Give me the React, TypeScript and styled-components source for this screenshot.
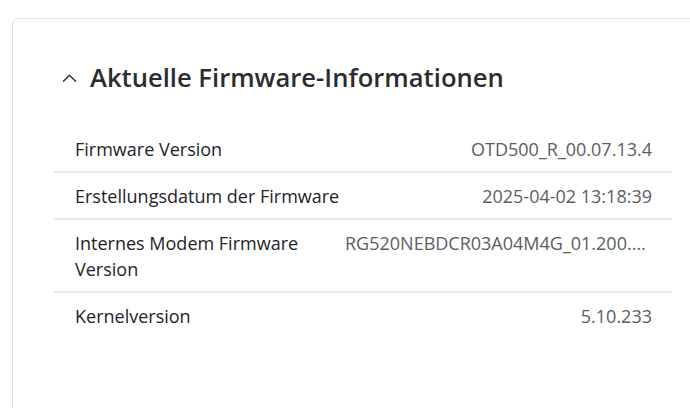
import React from "react";
import styled, { createGlobalStyle } from "styled-components";

const GlobalStyle = createGlobalStyle`
  html, body {
    margin: 0;
    padding: 0;
    background: #ffffff;
    overflow: hidden;
  }
  body {
    font-family: "Open Sans", "Noto Sans", Arial, sans-serif;
    color: #212529;
  }
`;

const Page = styled.div`
  width: 690px;
  height: 408px;
  padding: 18px 0 0 12px;
  box-sizing: border-box;
  overflow: hidden;
`;

const Card = styled.section`
  width: 720px;
  height: 420px;
  box-sizing: border-box;
  border: 1px solid #dde4ec;
  border-radius: 6px;
  padding: 0 0 0 41px;
  background: #fff;
`;

const Header = styled.button`
  display: flex;
  align-items: center;
  gap: 13px;
  border: none;
  background: none;
  padding: 0 0 0 8px;
  margin: 42px 0 0 0;
  height: 34px;
  cursor: pointer;
  color: #24272b;
`;

const Title = styled.h2`
  margin: 0;
  font-family: "Open Sans", "Noto Sans", sans-serif;
  font-size: 25.6px;
  font-weight: 600;
  line-height: 34px;
  color: #2a2c30;
`;

const Table = styled.div`
  margin-top: 31px;
  width: 618px;
  display: grid;
  grid-template-columns: 286px 1fr;
`;

const Row = styled.div<{ $last?: boolean }>`
  display: contents;
  & > div {
    padding-top: 10px;
    padding-bottom: 9px;
    border-bottom: ${(p) => (p.$last ? "none" : "2px solid #e6e9ed")};
    font-size: 18px;
    line-height: 26px;
  }
`;

const Label = styled.div`
  padding-left: 21px;
  color: #1f2328;
`;

const Value = styled.div`
  padding-left: 5px;
  padding-right: 20px;
  color: #5a5e63;
  text-align: right;
  white-space: nowrap;
  overflow: hidden;
  text-overflow: ellipsis;
  min-width: 0;
`;

const Chevron = () => (
  <svg width="15" height="10" viewBox="0 0 15 10" fill="none">
    <path d="M1.5 8.2L7.5 2.2L13.5 8.2" stroke="#2a2d31" strokeWidth="1.4" strokeLinecap="round" strokeLinejoin="round" />
  </svg>
);

const rows: [string, string][] = [
  ["Firmware Version", "OTD500_R_00.07.13.4"],
  ["Erstellungsdatum der Firmware", "2025-04-02 13:18:39"],
  ["Internes Modem Firmware Version", "RG520NEBDCR03A04M4G_01.200.01.200"],
  ["Kernelversion", "5.10.233"],
];

export default function App() {
  return (
    <>
      <GlobalStyle />
      <Page>
        <Card>
          <Header>
            <Chevron />
            <Title>Aktuelle Firmware-Informationen</Title>
          </Header>
          <Table>
            {rows.map(([l, v], i) => (
              <Row key={l} $last={i === rows.length - 1}>
                <Label>{l}</Label>
                <Value>{v}</Value>
              </Row>
            ))}
          </Table>
        </Card>
      </Page>
    </>
  );
}
